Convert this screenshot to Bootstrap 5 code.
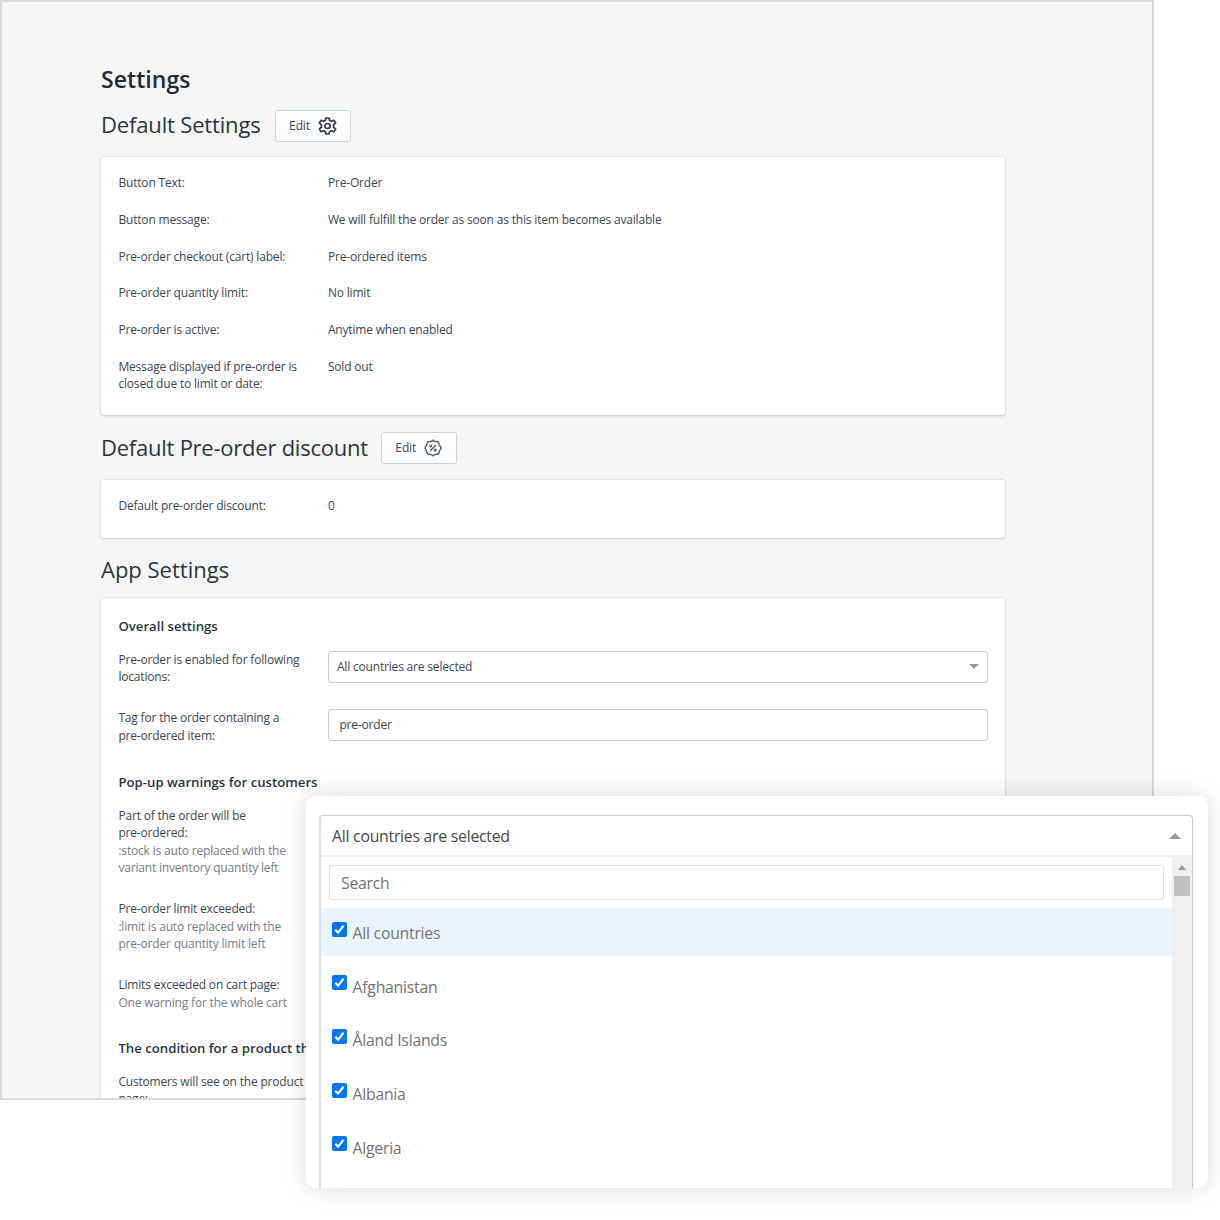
<!DOCTYPE html>
<html lang="en">
<head>
<meta charset="utf-8">
<title>Settings</title>
<link href="https://cdn.jsdelivr.net/npm/bootstrap@5.3.0/dist/css/bootstrap.min.css" rel="stylesheet">
<style>
body{width:1220px;height:1220px;overflow:hidden;font-family:"Open Sans","Noto Sans",sans-serif;font-size:12px;letter-spacing:-.18px;line-height:17.5px;color:#3b4855;background:#fff}
.app-frame{width:1154px;height:1100px;border:2px solid #d8d9db;background:#f4f6f8;padding:61px 147px 0 99px}
.page-title{font-size:23px;line-height:32px;font-weight:600;letter-spacing:.05px;color:#212b36}
.section-head{height:61.5px;gap:14px}
.section-title{font-size:22px;line-height:32px;font-weight:400;letter-spacing:-.24px;color:#2b3642;padding-bottom:3px}
.section-title.loose{letter-spacing:0}
.section-title.wide{letter-spacing:-.16px}
.edit-btn{width:76px;height:31.5px;border:1px solid #cdd5dc;border-radius:3px;background:linear-gradient(#fff,#f9fafb);color:#3b4855;font-size:12px;letter-spacing:-.1px;line-height:17.5px;padding:0 0 0 13.5px;gap:8px}
.panel{border:0;border-radius:3px;background:#fff;box-shadow:0 0 0 1px rgba(63,63,68,.06),0 1px 3px rgba(63,63,68,.17);padding:17.8px 17.4px 0;color:inherit}
.setting{margin-bottom:19.2px}
.setting>.name{width:209.5px;flex:none}
.group-title{font-size:13.2px;line-height:20px;font-weight:600;letter-spacing:0;color:#2b3642;margin-bottom:14.4px}
.hint{color:#73808b}
.field{height:32px;border:1px solid #c8ced4;border-radius:3px;background:#fff}
.caret{width:0;height:0;border:5px solid transparent}
.caret-open{border-width:0 6px 6px;border-bottom-color:#999}
.caret-closed{border-width:5px 5px 0;border-top-color:#999}
.caret-rail{border-width:0 4.5px 5px;border-bottom-color:#999}
.dropdown-zoom{position:absolute;left:306px;top:796px;width:902px;height:392px;border-radius:10px;background:#fff;box-shadow:0 0 24px rgba(0,0,0,.14);padding:19px 15px 0 13px;overflow:hidden}
.list-box{height:373px;border:1px solid #c9cbcd;border-left:2px solid #dfe2e4;border-bottom:0;border-radius:4px 4px 0 0;font-size:15.8px;letter-spacing:-.25px;line-height:22px}
.list-head{height:41px;border-bottom:2px solid #ebedee;padding:0 11px;color:#4a4a4a}
.search{height:35px;border:1px solid #dfe3e3;border-radius:3px;margin:8px 8px 7.5px;padding:1px 11px 0;color:#757575}
.option{height:48.5px;padding:3px 11px 0;margin-bottom:5.1px;gap:5.5px;color:#757575}
.option.picked{background:#e9f4ff}
.tick{width:15px;height:15px;margin-top:-8px;flex:none}
.scrollbar-rail{width:20px;background:#f0f0f0;padding-top:8px}
.scrollbar-thumb{width:16px;height:20px;background:#c1c1c1;margin-top:6px}
</style>
</head>
<body class="position-relative">
<svg width="0" height="0" class="position-absolute"><symbol id="tick" viewBox="0 0 15 15"><rect width="15" height="15" rx="2" fill="#0075ff"/><path d="M3.300 7.800l2.800 2.800 5.400-6.800" fill="none" stroke="#fff" stroke-width="2.200"/></symbol></svg>
<main class="app-frame overflow-hidden">
  <h1 class="page-title mb-0">Settings</h1>
  <div class="section-head d-flex align-items-center">
    <h2 class="section-title wide mb-0">Default Settings</h2>
    <button class="edit-btn d-flex align-items-center"><span>Edit</span>
      <svg width="19" height="18" viewBox="0 0 18 18" preserveAspectRatio="none" fill="none" stroke="#35404b" stroke-width="1.7" stroke-linejoin="round"><path d="M7.600 1h2.800l.6 2.300 1.500.9 2.500-.9 1.700 2.700-1.900 1.800v2.400l1.900 1.800-1.700 2.700-2.500-.9-1.500.9-.6 2.300H7.600L7 14.700l-1.500-.9-2.500.9L1.300 12l1.900-1.800V7.800L1.300 6 3 3.300l2.500.9L7 3.300z"/><circle cx="9" cy="9" r="2.500"/></svg></button>
  </div>
  <section class="panel card" style="height:258.5px">
    <div class="setting d-flex"><div class="name">Button Text:</div><div>Pre-Order</div></div>
    <div class="setting d-flex"><div class="name">Button message:</div><div>We will fulfill the order as soon as this item becomes available</div></div>
    <div class="setting d-flex"><div class="name">Pre-order checkout (cart) label:</div><div>Pre-ordered items</div></div>
    <div class="setting d-flex"><div class="name">Pre-order quantity limit:</div><div>No limit</div></div>
    <div class="setting d-flex"><div class="name">Pre-order is active:</div><div>Anytime when enabled</div></div>
    <div class="setting d-flex"><div class="name">Message displayed if pre-order is<br>closed due to limit or date:</div><div>Sold out</div></div>
  </section>
  <div class="section-head d-flex align-items-center" style="height:64.5px;padding-top:1px;gap:13px">
    <h2 class="section-title mb-0" style="padding-bottom:2px">Default Pre-order discount</h2>
    <button class="edit-btn d-flex align-items-center"><span>Edit</span>
      <svg width="18" height="18" viewBox="0 0 18 18" fill="none" stroke="#5b6875" stroke-width="1.6" stroke-linejoin="round" stroke-linecap="round"><path d="M9 1.200Q10.500 3 12.500 2.500Q14.700 2.200 14.700 4.500Q14.900 6.200 16.300 7.200Q17.600 9 16.200 10.700Q15 12 15.200 13.500Q14.800 15.400 12.700 15.200Q10.800 15 9 16.800Q7.200 15 5.300 15.200Q3.200 15.400 2.900 13.400Q3 12 1.800 10.700Q.5 9 1.800 7.200Q3.100 6.200 3.200 4.500Q3.400 2.300 5.500 2.500Q7.500 3 9 1.200z"/><path d="M6.500 11.500l5-5"/><circle cx="6.800" cy="6.900" r=".7"/><circle cx="11.200" cy="11.100" r=".7"/></svg></button>
  </div>
  <section class="panel card" style="height:58.5px">
    <div class="setting d-flex"><div class="name">Default pre-order discount:</div><div>0</div></div>
  </section>
  <div class="section-head d-flex align-items-center" style="height:60px;padding-top:4px">
    <h2 class="section-title loose mb-0">App Settings</h2>
  </div>
  <section class="panel card" style="height:520px;padding-top:18.3px">
    <h3 class="group-title">Overall settings</h3>
    <div class="setting d-flex" style="height:39.3px"><div class="name">Pre-order is enabled for following<br>locations:</div>
      <div class="field flex-grow-1 d-flex align-items-center justify-content-between px-2"><span>All countries are selected</span><span class="caret caret-closed"></span></div></div>
    <div class="setting d-flex" style="height:44px"><div class="name">Tag for the order containing a<br>pre-ordered item:</div>
      <div class="field flex-grow-1 d-flex align-items-center" style="padding-left:10.5px">pre-order</div></div>
    <h3 class="group-title">Pop-up warnings for customers</h3>
    <div class="setting" style="margin-bottom:23.5px">Part of the order will be<br>pre-ordered:<div class="hint">:stock is auto replaced with the<br>variant inventory quantity left</div></div>
    <div class="setting" style="margin-bottom:23.5px">Pre-order limit exceeded:<div class="hint">:limit is auto replaced with the<br>pre-order quantity limit left</div></div>
    <div class="setting" style="margin-bottom:27px">Limits exceeded on cart page:<div class="hint">One warning for the whole cart</div></div>
    <h3 class="group-title">The condition for a product that</h3>
    <div>Customers will see on the product<br>page:</div>
  </section>
</main>
<div class="dropdown-zoom">
  <div class="list-box d-flex flex-column overflow-hidden">
    <div class="list-head d-flex align-items-center justify-content-between flex-shrink-0"><span>All countries are selected</span><span class="caret caret-open"></span></div>
    <div class="d-flex flex-grow-1">
      <div class="flex-grow-1">
        <div class="search d-flex align-items-center">Search</div>
        <div class="option picked d-flex align-items-center"><svg class="tick"><use href="#tick"/></svg><span>All countries</span></div>
        <div class="option d-flex align-items-center"><svg class="tick"><use href="#tick"/></svg><span>Afghanistan</span></div>
        <div class="option d-flex align-items-center"><svg class="tick"><use href="#tick"/></svg><span>Åland Islands</span></div>
        <div class="option d-flex align-items-center"><svg class="tick"><use href="#tick"/></svg><span>Albania</span></div>
        <div class="option d-flex align-items-center"><svg class="tick"><use href="#tick"/></svg><span>Algeria</span></div>
      </div>
      <div class="scrollbar-rail d-flex flex-column align-items-center flex-shrink-0"><span class="caret caret-rail"></span><span class="scrollbar-thumb"></span></div>
    </div>
  </div>
</div>
<script src="https://cdn.jsdelivr.net/npm/bootstrap@5.3.0/dist/js/bootstrap.bundle.min.js"></script>
</body>
</html>
